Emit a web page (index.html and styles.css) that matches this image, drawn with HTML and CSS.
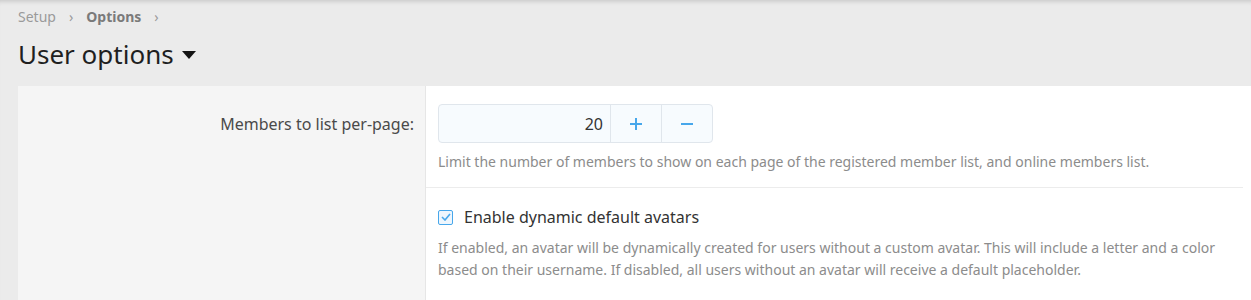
FILE: index.html
```html
<!DOCTYPE html>
<html lang="en">
<head>
    <meta charset="UTF-8">
    <title>User options</title>
    <link rel="stylesheet" href="styles.css">
</head>
<body>
    <div class="page-header">
        <ul class="crumbs">
            <li><a href="#">Setup</a></li>
            <li><a href="#" class="current">Options</a></li>
        </ul>
        <h1 class="title">User options <span class="caret"></span></h1>
    </div>

    <div class="block">
        <div class="row">
            <div class="row-label">Members to list per-page:</div>
            <div class="row-body">
                <div class="spinner">
                    <input type="text" class="spinner-input" value="20">
                    <button type="button" class="spinner-btn">
                        <svg width="14" height="14" viewBox="0 0 14 14"><path d="M7 1v12M1 7h12" stroke="#47a7eb" stroke-width="2"/></svg>
                    </button>
                    <button type="button" class="spinner-btn">
                        <svg width="14" height="14" viewBox="0 0 14 14"><path d="M1 7h12" stroke="#47a7eb" stroke-width="2"/></svg>
                    </button>
                </div>
                <div class="hint">Limit the number of members to show on each page of the registered member list, and online members list.</div>
            </div>
        </div>
        <div class="row">
            <div class="row-label"></div>
            <div class="row-body">
                <label class="check">
                    <span class="check-box">
                        <svg width="10" height="8" viewBox="0 0 10 8"><path d="M1 4l3 3 5-6" fill="none" stroke="#47a7eb" stroke-width="1.6"/></svg>
                    </span>
                    Enable dynamic default avatars
                </label>
                <div class="hint">If enabled, an avatar will be dynamically created for users without a custom avatar. This will include a letter and a color<br>based on their username. If disabled, all users without an avatar will receive a default placeholder.</div>
            </div>
        </div>
    </div>
</body>
</html>
```

FILE: styles.css
```css
body {
    margin: 0;
    background: #ebebeb;
    font-family: "Noto Sans", "Open Sans", sans-serif;
    color: #141414;
    box-shadow: inset 0 5px 5px -4px rgba(0, 0, 0, 0.18);
    height: 300px;
    overflow: hidden;
}
.page-header {
    padding: 7px 18px 0;
    height: 86px;
    box-sizing: border-box;
}
.crumbs {
    list-style: none;
    margin: 0;
    padding: 0;
    display: flex;
    font-size: 14px;
    line-height: 20px;
}
.crumbs li::after {
    content: "\203A";
    margin: 0 13px 0 13px;
    color: #9a9a9a;
}
.crumbs a {
    color: #9a9a9a;
    text-decoration: none;
}
.crumbs a.current {
    font-weight: bold;
    color: #7a7a7a;
}
.title {
    margin: 9px 0 0;
    font-size: 26px;
    font-weight: normal;
    line-height: 36px;
    color: #1f1f1f;
}
.caret {
    display: inline-block;
    width: 0;
    height: 0;
    border-left: 7px solid transparent;
    border-right: 7px solid transparent;
    border-top: 8px solid #141414;
    vertical-align: middle;
    margin-left: 2px;
    position: relative;
    top: -2px;
}
.block {
    margin-left: 18px;
    background: #fff;
}
.row {
    display: grid;
    grid-template-columns: 408px 1fr;
}
.row-label {
    background: #f5f5f5;
    border-right: 1px solid #e6e6e6;
    text-align: right;
    font-size: 16px;
    color: #4a4a4a;
    padding: 27px 11px 0 0;
    line-height: 22px;
}
.row-body {
    padding: 18px 8px 0 12px;
}
.row + .row .row-body {
    border-top: 1px solid #ececec;
    margin-right: 8px;
    padding-top: 18px;
}
.row:first-child .row-body {
    padding-bottom: 14px;
}
.spinner {
    display: flex;
    width: 275px;
    height: 39px;
    border: 1px solid #e0e6ec;
    border-radius: 4px;
    background: #f7fbfe;
    box-sizing: border-box;
}
.spinner-input {
    flex: 1;
    min-width: 0;
    border: none;
    background: transparent;
    font: inherit;
    font-size: 16px;
    text-align: right;
    padding: 0 7px 0 0;
    color: #333;
}
.spinner-btn {
    width: 51px;
    border: none;
    border-left: 1px solid #e0e6ec;
    background: transparent;
    padding: 0;
    display: flex;
    align-items: center;
    justify-content: center;
}
.hint {
    font-size: 14px;
    line-height: 22px;
    color: #8c8c8c;
    margin-top: 8px;
}
.check {
    display: flex;
    align-items: center;
    font-size: 16px;
    line-height: 22px;
    color: #333;
}
.check-box {
    width: 15px;
    height: 15px;
    box-sizing: border-box;
    border: 1px solid #47a7eb;
    border-radius: 2px;
    background: #eef6fd;
    display: flex;
    align-items: center;
    justify-content: center;
    margin-right: 11px;
}
.row + .row .hint {
    margin-top: 9px;
    padding-bottom: 20px;
}
```
